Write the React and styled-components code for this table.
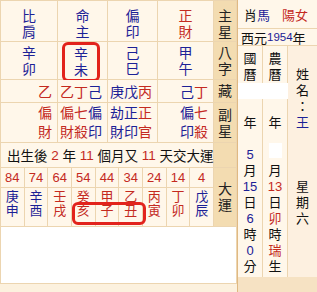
import styled, { createGlobalStyle } from "styled-components";

const NAVY = "#1c2196";
const RED = "#c42a1f";
const LINE = "#ecd5b0";

const GlobalStyle = createGlobalStyle`
  html, body {
    margin: 0;
    padding: 0;
    background: #fcf1de;
  }
  body {
    font-family: "Liberation Sans", "Noto Sans CJK TC", sans-serif;
    color: #111;
  }
`;

const pillars = [
  {
    main: ["比肩", NAVY],
    gz: "辛卯",
    hidden: [["乙", RED]],
    sub: [["偏財", RED]],
  },
  {
    main: ["命主", NAVY],
    gz: "辛未",
    mark: true,
    hidden: [["乙", RED], ["丁", RED], ["己", NAVY]],
    sub: [["偏財", RED], ["七殺", RED], ["偏印", NAVY]],
  },
  {
    main: ["偏印", NAVY],
    gz: "己巳",
    hidden: [["庚", NAVY], ["戊", NAVY], ["丙", RED]],
    sub: [["劫財", NAVY], ["正印", NAVY], ["正官", RED]],
  },
  {
    main: ["正財", RED],
    gz: "甲午",
    hidden: [["己", NAVY], ["丁", RED]],
    sub: [["偏印", NAVY], ["七殺", RED]],
  },
];

const dayun = [
  ["84", "庚申", NAVY],
  ["74", "辛酉", NAVY],
  ["64", "壬戌", RED],
  ["54", "癸亥", RED],
  ["44", "甲子", RED],
  ["34", "乙丑", RED],
  ["24", "丙寅", RED],
  ["14", "丁卯", RED],
  ["4", "戊辰", NAVY],
];

// right panel columns, one entry per text line
const solar = [
  ["國"], ["曆"], ["mask"], [""], ["年"], [""],
  ["5", NAVY], ["月"], ["15", NAVY], ["日"], ["6", NAVY], ["時"], ["0", NAVY], ["分"],
];
const lunar = [
  ["農"], ["曆"], ["mask"], [""], ["年"], [""],
  ["dot"], ["月"], ["13", RED], ["日"], ["卯", RED], ["時"], ["瑞", RED], ["生"],
];
const extra = [
  [""], ["姓"], ["名"], ["："], ["王", NAVY], [""], [""], [""], ["星"], ["期"], ["六"],
];

export default function App() {
  return (
    <Page>
      <GlobalStyle />
      <Chart>
        {pillars.map((p, i) => (
          <Cell key={"m" + i} $top>
            <Stack $color={p.main[1]}>
              {p.main[0].split("").map((c, j) => <span key={j}>{c}</span>)}
            </Stack>
          </Cell>
        ))}
        <Label $top>
          <span>主</span>
          <span>星</span>
        </Label>

        {pillars.map((p, i) => (
          <Cell key={"g" + i}>
            {p.mark ? (
              <Marked>
                <Stack $color={NAVY}>
                  <span>{p.gz[0]}</span>
                  <span>{p.gz[1]}</span>
                </Stack>
              </Marked>
            ) : (
              <Stack $color={NAVY}>
                <span>{p.gz[0]}</span>
                <span>{p.gz[1]}</span>
              </Stack>
            )}
          </Cell>
        ))}
        <Label>
          <span>八</span>
          <span>字</span>
        </Label>

        {pillars.map((p, i) => (
          <Cell key={"h" + i} $right>
            {p.hidden.map(([c, col], j) => (
              <Char key={j} $color={col}>
                {c}
              </Char>
            ))}
          </Cell>
        ))}
        <Label>
          <span>藏</span>
        </Label>

        {pillars.map((p, i) => (
          <Cell key={"s" + i} $right>
            {p.sub.map(([w, col], j) => (
              <Stack key={j} $color={col} $tall>
                <span>{w[0]}</span>
                <span>{w[1]}</span>
              </Stack>
            ))}
          </Cell>
        ))}
        <Label>
          <span>副</span>
          <span>星</span>
        </Label>

        <StartRow>
          出生後 <Num>2</Num> 年 <Num>11</Num> 個月又 <Num>11</Num> 天交大運
        </StartRow>
        <Label />

        <Dayun>
          {dayun.map(([age], i) => (
            <Age key={age} $col={i + 1}>
              {age}
            </Age>
          ))}
          {dayun.map(([age, gz, col], i) => (
            <Pair key={"p" + age} $col={i + 1} $color={col}>
              <span>{gz[0]}</span>
              <span>{gz[1]}</span>
            </Pair>
          ))}
          <DayunMark />
        </Dayun>
        <Label>
          <span>大</span>
          <span>運</span>
        </Label>

        <Blank />
      </Chart>

      <Side>
        <ZodiacRow>
          <span>
            肖<Blue>馬</Blue>
          </span>
          <Red>陽女</Red>
        </ZodiacRow>
        <YearRow>
          西元<YearNum>1954</YearNum>年
        </YearRow>
        <BirthTable>
          <BirthCol>
            <Lines items={solar} />
          </BirthCol>
          <BirthCol>
            <Lines items={lunar} />
          </BirthCol>
          <BirthCol $soft>
            <Lines items={extra} />
          </BirthCol>
        </BirthTable>
        <SideFoot />
      </Side>
    </Page>
  );
}

function Lines({ items }) {
  return items.map(([t, col], i) => {
    if (t === "mask") return <Mask key={i} />;
    if (t === "dot") return <Dot key={i} />;
    return (
      <Line key={i} $color={col}>
        {t || "\u00a0"}
      </Line>
    );
  });
}

const Page = styled.div`
  display: flex;
  width: 317px;
  height: 292px;
  overflow: hidden;
  background: #fcf1de;
`;

const Chart = styled.div`
  display: grid;
  grid-template-columns: 56px 49px 49px 55px 22px;
  grid-template-rows: 40px 37px 22px 39px 24px 58px 56px;
  gap: 1px;
  width: 237px;
  box-sizing: border-box;
  align-self: flex-start;
  background: ${LINE};
  border: 1px solid ${LINE};
  font-size: 14px;
`;

const Cell = styled.div`
  display: flex;
  align-items: center;
  justify-content: ${(p) => (p.$right ? "flex-end" : "center")};
  padding: ${(p) => (p.$top ? "6px 0 0" : p.$right ? "0 5px 0 0" : "0")};
  background: #fff7ea;
`;

const Stack = styled.div`
  display: flex;
  flex-direction: column;
  align-items: center;
  line-height: ${(p) => (p.$tall ? "19px" : "16px")};
  color: ${(p) => p.$color};
`;

const Char = styled.span`
  color: ${(p) => p.$color};
`;

const Marked = styled.div`
  display: flex;
  align-items: center;
  justify-content: center;
  width: 38px;
  height: 40px;
  box-sizing: border-box;
  margin: 3px 3px 0 0;
  border: 3px solid #e2231c;
  border-radius: 6px;
`;

const Label = styled.div`
  display: flex;
  flex-direction: column;
  align-items: center;
  justify-content: center;
  padding-top: ${(p) => (p.$top ? "6px" : "0")};
  line-height: 16px;
  background: #f3dcb1;
  color: #222;
`;

const StartRow = styled.div`
  grid-column: 1 / 5;
  display: flex;
  align-items: center;
  padding-left: 6px;
  background: #fff7ea;
  font-size: 13.5px;
  white-space: pre;
`;

const Num = styled.span`
  color: ${RED};
`;

const Dayun = styled.div`
  grid-column: 1 / 5;
  display: grid;
  grid-template-columns: repeat(9, 1fr);
  grid-template-rows: 19px 38px;
  gap: 1px;
  background: ${LINE};
  font-size: 13px;
`;

const Age = styled.div`
  grid-row: 1;
  grid-column: ${(p) => p.$col};
  display: flex;
  align-items: center;
  justify-content: center;
  background: #fff7ea;
  color: ${RED};
`;

const Pair = styled.div`
  grid-row: 2;
  grid-column: ${(p) => p.$col};
  display: flex;
  flex-direction: column;
  align-items: center;
  padding-top: 2px;
  line-height: 14px;
  background: #fff7ea;
  color: ${(p) => p.$color};
`;

const DayunMark = styled.div`
  grid-column: 4 / 7;
  grid-row: 2;
  align-self: end;
  height: 23px;
  box-sizing: border-box;
  margin: 0 -4px 1px 0;
  border: 3px solid #e2231c;
  border-radius: 6px;
  pointer-events: none;
`;

const Blank = styled.div`
  grid-column: 1 / -1;
  background: #fff;
`;

const Side = styled.aside`
  flex: 1;
  display: flex;
  flex-direction: column;
  border-left: 1px solid #e0b982;
  background: #f6e2c3;
  font-size: 13px;
`;

const ZodiacRow = styled.div`
  display: flex;
  align-items: center;
  justify-content: space-between;
  height: 28px;
  padding: 0 9px 0 6px;
  background: #fff7ea;
  border-bottom: 1px solid ${LINE};
`;

const YearRow = styled.div`
  display: flex;
  align-items: center;
  height: 16px;
  padding-left: 3px;
  background: #fff7ea;
  border-bottom: 1px solid ${LINE};
  white-space: nowrap;
`;

const Blue = styled.span`
  color: ${NAVY};
`;

const YearNum = styled.span`
  color: ${NAVY};
  font-size: 11.5px;
`;

const Red = styled.span`
  color: ${RED};
`;

const BirthTable = styled.div`
  display: grid;
  grid-template-columns: 24px 24px 1fr;
  gap: 1px;
  height: 231px;
  background: ${LINE};
`;

const BirthCol = styled.div`
  display: flex;
  flex-direction: column;
  align-items: center;
  padding-top: 5px;
  background: ${(p) => (p.$soft ? "#fdf0e0" : "#fff7ea")};
`;

const Line = styled.span`
  line-height: 16px;
  height: 16px;
  color: ${(p) => p.$color || "#111"};
`;

const Mask = styled.div`
  align-self: stretch;
  height: 16px;
  margin-right: -1px;
  background: #fff;
`;

const Dot = styled.div`
  width: 13px;
  height: 15px;
  margin-top: -4px;
  margin-bottom: 5px;
  background: #fff;
`;

const SideFoot = styled.div`
  flex: 1;
`;
